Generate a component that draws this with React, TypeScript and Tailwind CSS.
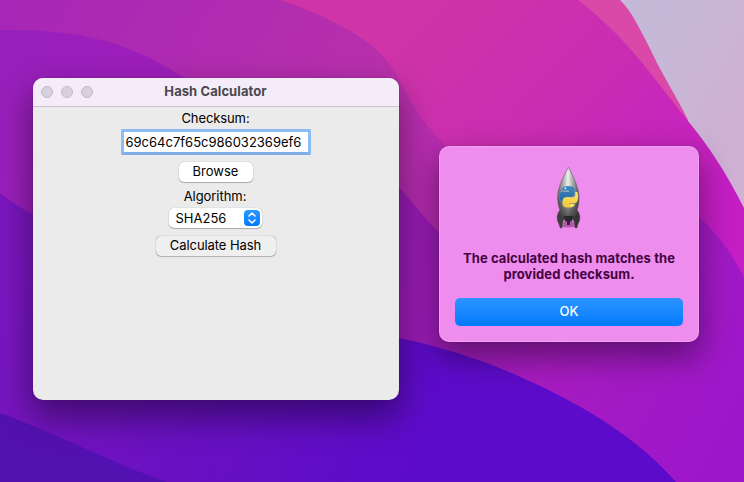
import React from "react";

function Wallpaper() {
  return (
    <svg className="absolute inset-0" width="744" height="482" viewBox="0 0 744 482" aria-hidden="true">
      <defs>
        <linearGradient id="sky" gradientUnits="userSpaceOnUse" x1="640" y1="30" x2="744" y2="90">
          <stop offset="0" stopColor="#c5b9d8" />
          <stop offset="0.7" stopColor="#cbb4d4" />
          <stop offset="1" stopColor="#ceb1d4" />
        </linearGradient>
        <linearGradient id="pink" gradientUnits="userSpaceOnUse" x1="400" y1="0" x2="660" y2="260">
          <stop offset="0" stopColor="#cf35a6" />
          <stop offset="0.5" stopColor="#ca2db2" />
          <stop offset="1" stopColor="#c41ec4" />
        </linearGradient>
        <linearGradient id="orchid" gradientUnits="userSpaceOnUse" x1="0" y1="0" x2="744" y2="400">
          <stop offset="0" stopColor="#a626b6" />
          <stop offset="0.45" stopColor="#b930ac" />
          <stop offset="1" stopColor="#ab18c6" />
        </linearGradient>
        <linearGradient id="violet" gradientUnits="userSpaceOnUse" x1="0" y1="40" x2="744" y2="440">
          <stop offset="0" stopColor="#9720bc" />
          <stop offset="0.25" stopColor="#a01dba" />
          <stop offset="0.5" stopColor="#971cb4" />
          <stop offset="0.75" stopColor="#a71cc0" />
          <stop offset="1" stopColor="#9c16cb" />
        </linearGradient>
        <linearGradient id="deep" gradientUnits="userSpaceOnUse" x1="0" y1="300" x2="420" y2="440">
          <stop offset="0" stopColor="#7a16bf" />
          <stop offset="0.45" stopColor="#6a11c1" />
          <stop offset="1" stopColor="#5d0bca" />
        </linearGradient>
      </defs>
      <rect width="744" height="482" fill="url(#sky)" />
      <path d="M0 0H620Q629 9 636 22Q648 44 657 63C673 93 681 105 688 120L688 150L560 120Z" fill="#da49a8" />
      <path d="M0 0H578C627 38 648 71 688 121C708 145 727 174 744 208V482H0Z" fill="url(#pink)" />
      <path d="M0 0H281C329 17 370 38 388 62C400 78 408 98 421 117C431 131 442 142 453 153L600 200L699 217C718 234 732 254 744 277V482H0Z" fill="url(#orchid)" />
      <path d="M0 30C70 29 128 38 190 82L399 187C412 202 425 218 439 233L560 300L699 217C718 234 732 254 744 277V482H0Z" fill="url(#violet)" />
      <path d="M0 193C12 202 22 209 33 214L200 338H399C435 345 488 361 527 380C587 407 637 438 676 482H0Z" fill="url(#deep)" />
      <path d="M0 413C50 431 109 461 166 482H0Z" fill="#5411b1" />
    </svg>
  );
}

function Rocket() {
  return (
    <svg className="mr-[2px] h-16 w-16" viewBox="0 0 64 64" aria-hidden="true">
      <defs>
        <linearGradient id="hull" x1="0" x2="1" y1="0" y2="0">
          <stop offset="0" stopColor="#666" />
          <stop offset="0.25" stopColor="#aaa" />
          <stop offset="0.48" stopColor="#eee" />
          <stop offset="0.7" stopColor="#aaa" />
          <stop offset="1" stopColor="#555" />
        </linearGradient>
        <linearGradient id="shade" x1="0" x2="0" y1="0" y2="1">
          <stop offset="0.4" stopColor="#333" stopOpacity="0" />
          <stop offset="1" stopColor="#222" stopOpacity="0.75" />
        </linearGradient>
        <linearGradient id="blue" x1="0" x2="0" y1="0" y2="1">
          <stop offset="0" stopColor="#4389bf" />
          <stop offset="1" stopColor="#24669f" />
        </linearGradient>
        <linearGradient id="gold" x1="0" x2="0" y1="0" y2="1">
          <stop offset="0" stopColor="#ffe365" />
          <stop offset="1" stopColor="#f1c82f" />
        </linearGradient>
      </defs>
      <ellipse cx="32.3" cy="58.5" rx="10" ry="3" fill="#8d397f" opacity="0.6" />
      <path d="M24 44C20.5 48 20.5 53 22 56Q23.5 58 24 62L26 62Q26 56 28.5 52L27 45Z" fill="#3e3e3e" stroke="#555" strokeWidth=".4" />
      <path d="M41 44C44.5 48 44.5 53 43 56Q41.5 58 41 62L39 62Q39 56 36.5 52L38 45Z" fill="#343434" stroke="#555" strokeWidth=".4" />
      <path d="M32.3 1.3C28 10 22 20 21.7 31C21.6 39 24 45 27 50.5H38C41.5 45 43.3 38 43 31C42.5 20 37 10 32.3 1.3Z" fill="url(#hull)" stroke="#686868" strokeWidth=".7" />
      <path d="M32.3 1.3C28 10 22 20 21.7 31C21.6 39 24 45 27 50.5H38C41.5 45 43.3 38 43 31C42.5 20 37 10 32.3 1.3Z" fill="url(#shade)" />
      <path d="M27.5 50H37.5L36 55.5H34V59H31V55.5H29Z" fill="#292929" />
      <g stroke="#d5dbe0" strokeOpacity=".4" strokeWidth=".4">
        <path d="M26 25.5V23Q26 20 32.5 20Q38.7 20 38.7 23V28Q38.7 31 35.5 31H30.5Q27.5 31 27.5 35.5H26Q23.4 35 23 31Q23 25.5 26 25.5H33V24.8H26Z" fill="url(#blue)" />
        <path d="M39.3 26H41Q42.3 27 42 32Q41.6 37 39 37H33V37.8H39Q39 41.5 32.8 41.5Q26.7 41.5 26.7 38.5V34.5Q27 31.5 29.8 31.5H35.8Q39.3 31.5 39.3 28.5Z" fill="url(#gold)" />
      </g>
      <circle cx="29.3" cy="22.4" r=".9" fill="#e5f4ff" />
      <circle cx="35.7" cy="39.4" r=".9" fill="#fffbe0" />
    </svg>
  );
}

function CalculatorWindow() {
  return (
    <section className="absolute left-[33px] top-[78px] flex h-[322px] w-[366px] flex-col overflow-hidden rounded-[10px] bg-[#ebebeb] shadow-[0_0_1px_rgba(0,0,0,0.55),0_16px_34px_2px_rgba(0,0,0,0.42)]">
      <header className="grid h-[29px] shrink-0 grid-cols-[80px_1fr_81px] items-center border-b border-[#c8c5c9] bg-[#f4ecf8] pb-px">
        <div className="flex gap-2 pl-2">
          <i className="size-3 rounded-full border border-[#c0b9c5] bg-[#d8d0dd]" />
          <i className="size-3 rounded-full border border-[#c0b9c5] bg-[#d8d0dd]" />
          <i className="size-3 rounded-full border border-[#c0b9c5] bg-[#d8d0dd]" />
        </div>
        <h1 className="pb-px text-center text-[13px] font-bold leading-4 tracking-[0.08px] text-[#4b474d]">Hash Calculator</h1>
      </header>
      <div className="flex flex-col items-center text-[13px] leading-4 text-black">
        <label className="mt-[3px] h-4 pr-px tracking-[-0.1px]">Checksum:</label>
        <div className="mt-[3px] flex h-[26px] w-[190px] items-center overflow-hidden rounded-[2px] border-[3px] border-[#8bbcf3] border-b-[#7eaee6] bg-white pl-[1.5px]">
          <span className="whitespace-nowrap">69c64c7f65c986032369ef6</span>
        </div>
        <button className="mt-[7px] h-5 w-[74px] rounded-[5px] bg-white pb-[2px] pr-px leading-[18px] shadow-[0_0_1px_rgba(0,0,0,0.35),0_1px_1px_rgba(0,0,0,0.25)]">Browse</button>
        <label className="mb-px mt-[6px] h-4 pr-[2px] tracking-[-0.05px]">Algorithm:</label>
        <button className="mr-[2px] mt-[3px] flex h-5 w-[93px] items-center justify-between rounded-[5px] bg-white pl-[7px] pr-[2px] shadow-[0_0_1px_rgba(0,0,0,0.35),0_1px_1px_rgba(0,0,0,0.25)]">
          <span>SHA256</span>
          <svg className="size-4 rounded-[4px] bg-linear-to-b from-[#2997ff] to-[#007aff]" viewBox="0 0 16 16" fill="none" stroke="white" strokeWidth="1.5" strokeLinecap="round" strokeLinejoin="round">
            <path d="M5 6L8 3L11 6M5 10L8 13L11 10" />
          </svg>
        </button>
        <button className="mt-2 h-5 w-[120px] rounded-[5px] bg-[#efefef] pb-[2px] pr-px leading-[18px] tracking-[-0.07px] shadow-[0_0_1px_rgba(0,0,0,0.55),0_1px_1px_rgba(0,0,0,0.2)]">Calculate Hash</button>
      </div>
    </section>
  );
}

function ResultDialog() {
  return (
    <section className="absolute left-[439px] top-[146px] flex h-[196px] w-[260px] flex-col items-center rounded-[10px] bg-[#ee8dee] px-4 pt-5 shadow-[inset_0_0_0_1px_rgba(255,190,255,0.4),0_0_1px_rgba(0,0,0,0.65),0_14px_32px_2px_rgba(0,0,0,0.4)]">
      <Rocket />
      <p className="mt-5 w-[228px] text-center text-[13px] font-bold leading-4 tracking-[0.08px] text-[#43043f]">The calculated hash matches the<br />provided checksum.</p>
      <button className="mt-4 h-7 w-[228px] rounded-[5px] bg-linear-to-b from-[#2a94ff] to-[#007aff] pb-[2px] text-[13px] font-medium leading-[26px] text-white">OK</button>
    </section>
  );
}

export default function App() {
  return (
    <main className="relative h-[482px] w-[744px] overflow-hidden font-['Inter','Liberation_Sans',sans-serif]">
      <Wallpaper />
      <CalculatorWindow />
      <ResultDialog />
    </main>
  );
}
